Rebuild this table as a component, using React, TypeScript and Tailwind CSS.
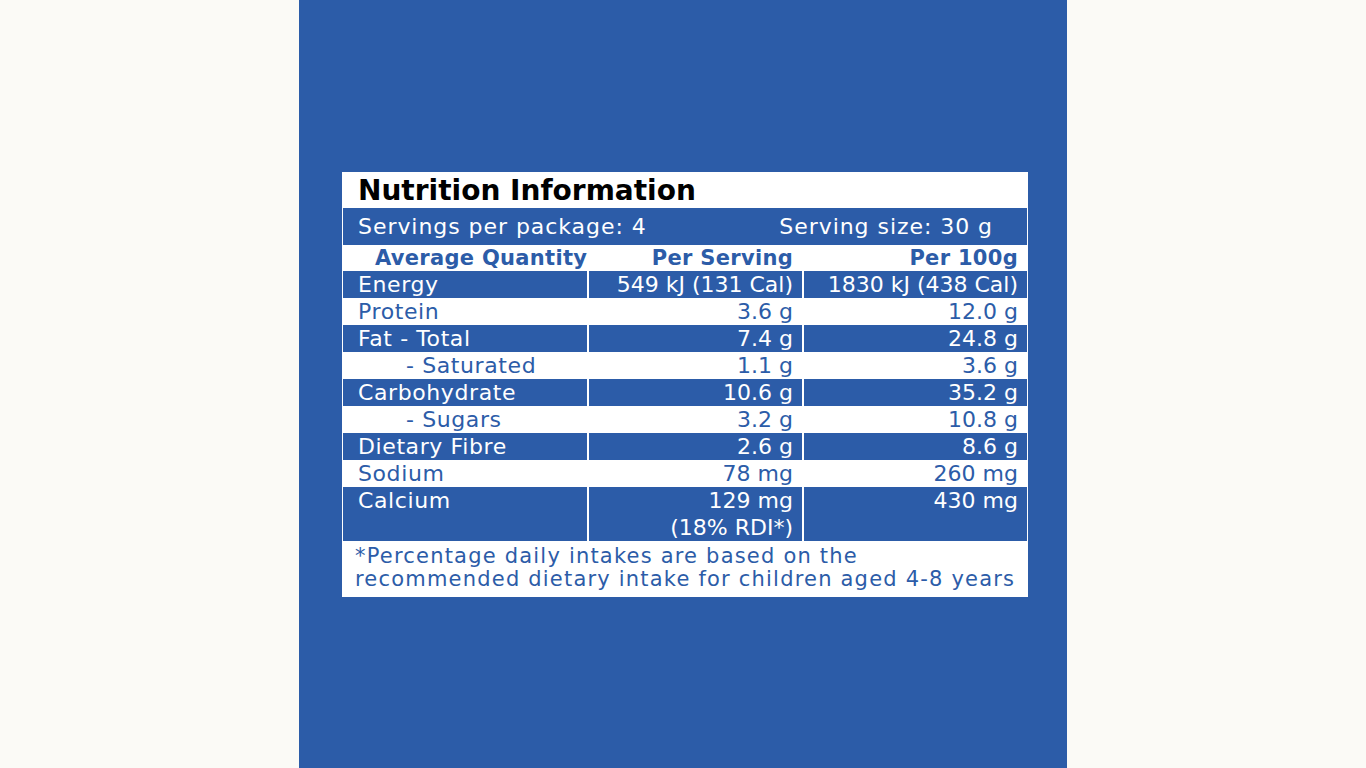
import React from "react";

type Row = {
  label: string;
  indent?: boolean;
  serving: string[];
  per100: string;
  blue: boolean;
  tall?: boolean;
};

const rows: Row[] = [
  { label: "Energy", serving: ["549 kJ (131 Cal)"], per100: "1830 kJ (438 Cal)", blue: true },
  { label: "Protein", serving: ["3.6 g"], per100: "12.0 g", blue: false },
  { label: "Fat - Total", serving: ["7.4 g"], per100: "24.8 g", blue: true },
  { label: "- Saturated", indent: true, serving: ["1.1 g"], per100: "3.6 g", blue: false },
  { label: "Carbohydrate", serving: ["10.6 g"], per100: "35.2 g", blue: true },
  { label: "- Sugars", indent: true, serving: ["3.2 g"], per100: "10.8 g", blue: false },
  { label: "Dietary Fibre", serving: ["2.6 g"], per100: "8.6 g", blue: true },
  { label: "Sodium", serving: ["78 mg"], per100: "260 mg", blue: false },
  { label: "Calcium", serving: ["129 mg", "(18% RDI*)"], per100: "430 mg", blue: true, tall: true },
];

export default function App() {
  return (
    <div
      className="w-full min-h-screen bg-[#fbfaf6] flex justify-center"
      style={{ fontFamily: '"DejaVu Sans", "Open Sans", sans-serif' }}
    >
      <div className="w-[768px] h-[768px] bg-[#2c5ca8] pt-[172px] pl-[43px]">
        <div className="w-[686px] bg-white px-[1px] flex flex-col">
          {/* Title */}
          <div className="h-[36px] pl-[15px] pt-[2px] text-[28px] leading-[34px] font-bold text-black whitespace-nowrap">
            Nutrition Information
          </div>
          {/* Servings row */}
          <div className="h-[37px] bg-[#2c5ca8] text-white flex items-center justify-between pl-[15px] pr-[34px] text-[22px] tracking-[0.95px] whitespace-nowrap">
            <span>Servings per package: 4</span>
            <span>Serving size: 30 g</span>
          </div>
          {/* Header row */}
          <div className="grid grid-cols-[244px_213px_223px] gap-x-[2px] h-[26px] text-[#2c5ca8] font-bold text-[21px] leading-[26px] tracking-[0.3px] whitespace-nowrap">
            <div className="pl-[32px] overflow-visible">Average Quantity</div>
            <div className="text-right pr-[9px]">Per Serving</div>
            <div className="text-right pr-[9px]">Per 100g</div>
          </div>
          {/* Data rows */}
          {rows.map((r) => {
            const cell = r.blue ? "bg-[#2c5ca8] text-white" : "bg-white text-[#2c5ca8]";
            return (
              <div
                key={r.label}
                className={`grid grid-cols-[244px_213px_223px] gap-x-[2px] text-[22px] leading-[27px] whitespace-nowrap ${
                  r.tall ? "h-[54px]" : "h-[27px]"
                }`}
              >
                <div className={`${cell} tracking-[0.6px] ${r.indent ? "pl-[63px]" : "pl-[15px]"}`}>{r.label}</div>
                <div className={`${cell} text-right pr-[9px] flex flex-col`}>
                  {r.serving.map((s) => (
                    <span key={s} className="leading-[27px]">{s}</span>
                  ))}
                </div>
                <div className={`${cell} text-right pr-[9px]`}>{r.per100}</div>
              </div>
            );
          })}
          {/* Footnote */}
          <div className="h-[56px] pl-[12px] pt-[4px] text-[#2c5ca8] text-[21px] leading-[23px] tracking-[1.2px] whitespace-nowrap">
            <div>*Percentage daily intakes are based on the</div>
            <div>recommended dietary intake for children aged 4-8 years</div>
          </div>
        </div>
      </div>
    </div>
  );
}
